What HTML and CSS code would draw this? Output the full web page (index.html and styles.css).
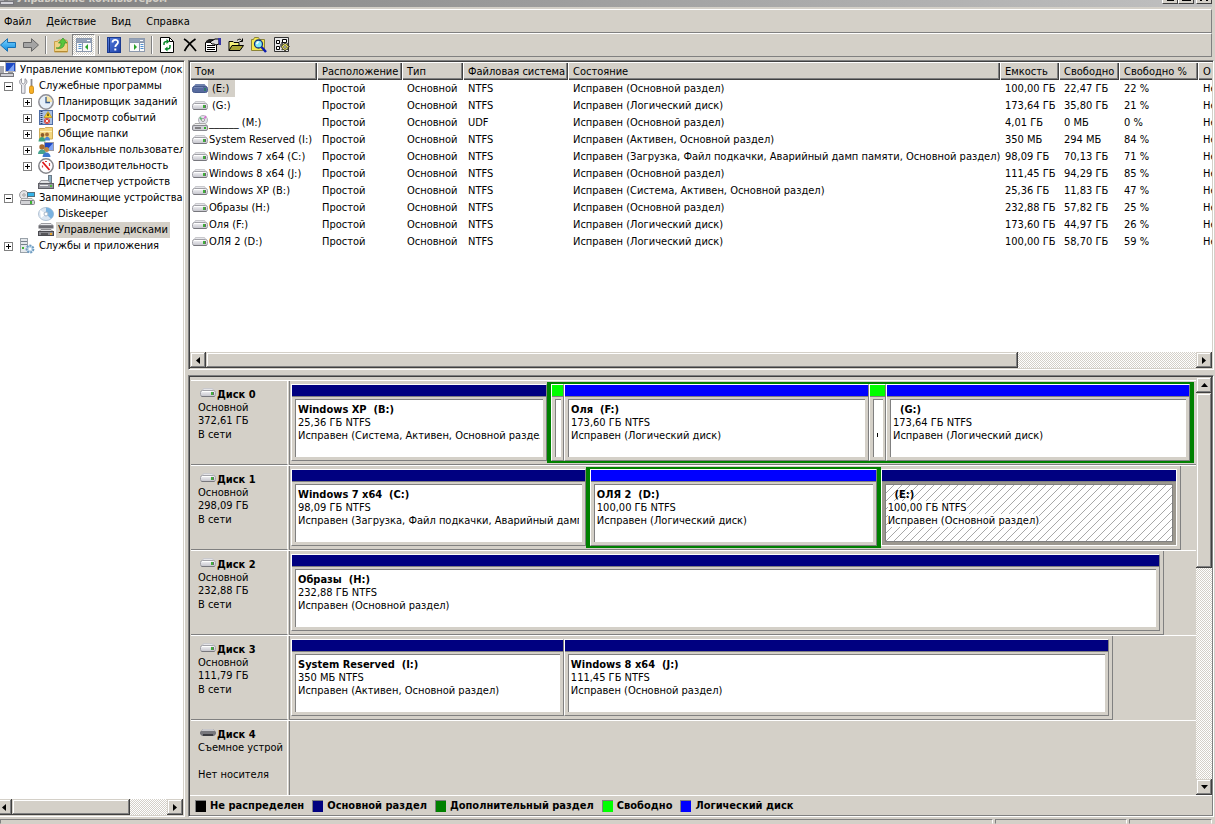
FILE: index.html
```
<!DOCTYPE html>
<html lang="ru">
<head>
<meta charset="utf-8">
<title>Управление компьютером</title>
<link rel="stylesheet" href="styles.css">
</head>
<body>
<svg class="sprite" aria-hidden="true">
  <defs>
    <linearGradient id="gDrive" x1="0" y1="0" x2="0" y2="1"><stop offset="0" stop-color="#f8f8fa"/><stop offset="1" stop-color="#c2c2ca"/></linearGradient>
    <linearGradient id="gBlue" x1="0" y1="0" x2="0" y2="1"><stop offset="0" stop-color="#7fd4ff"/><stop offset="1" stop-color="#0a8ae0"/></linearGradient>
    <linearGradient id="gHelp" x1="0" y1="0" x2="1" y2="1"><stop offset="0" stop-color="#5a82e0"/><stop offset="1" stop-color="#1c3fa8"/></linearGradient>
  </defs>
  <symbol id="drive" viewBox="0 0 16 10"><path d="M3.500 0h9L15 3H1z" fill="#c9c9cd"/><path d="M4 1h8l1 1H3z" fill="#e6e6ea"/><rect x=".5" y="2.500" width="15" height="6" rx="2" fill="url(#gDrive)" stroke="#a2a2a8"/><path d="M1.500 8.500h13" stroke="#77777d"/><path d="M2 3.500h9" stroke="#fff"/><rect x="11" y="4" width="2" height="3" fill="#3fae3a"/><rect x="13" y="4" width="1" height="3" fill="#68686c"/></symbol>
  <symbol id="driveSel" viewBox="0 0 16 10"><path d="M3.500 0h9L15 3H1z" fill="#7082ae"/><rect x=".5" y="2.500" width="15" height="6" rx="2" fill="#566a9e" stroke="#465a8c"/><path d="M2 3.500h9" stroke="#7486b4"/><rect x="12" y="4" width="2" height="3" fill="#2d7a6a"/></symbol>
  <symbol id="cdDrive" viewBox="0 0 16 16"><circle cx="11" cy="5" r="4.500" fill="#e2e2ea" stroke="#b4b4ba"/><path d="m12.500 3.500 1.500-2.500" stroke="#d46ad0" stroke-width="1.500"/><path d="M10 5 8 2.500" stroke="#55c06a" stroke-width="2"/><circle cx="11" cy="5" r="1.500" fill="#fff" stroke="#999"/><path d="M3 8.500h10l2.500 2.500H.5z" fill="#eee" stroke="#aaa"/><rect x=".5" y="10.500" width="15" height="5" rx="1.500" fill="#d0d0d6" stroke="#88888e"/><path d="M3 13h6" stroke="#333"/><rect x="12" y="12" width="2" height="2" fill="#2fae2a"/></symbol>
  <symbol id="removable" viewBox="0 0 16 10"><path d="M3 1h10l3 3v2l-2 2H2L0 6V4z" fill="#77777c"/><path d="M3 1h10l2 2H1z" fill="#c8c8cc"/><path d="M3 6h10v2H3z" fill="#3b3b40"/></symbol>
  <symbol id="back" viewBox="0 0 16 14"><path d="M.5 7 7.500.700v3.800h8v5h-8v3.800z" fill="url(#gBlue)" stroke="#1670b4"/></symbol>
  <symbol id="fwd" viewBox="0 0 16 14"><path d="M15.500 7 8.500.700v3.800h-8v5h8v3.800z" fill="#a4a4a4" stroke="#666"/></symbol>
  <symbol id="upFolder" viewBox="0 0 16 16"><path d="M1.500 15V4.500h3l1-1.500h8l1 1.500V15z" fill="#f0d284" stroke="#caa14a"/><path d="M2 14.500h12" stroke="#b58a32"/><path d="M3 11c4 0 5-2 5-5H5.500L10 1l4 5h-2.500c0 4-3 6.500-8.500 5z" fill="#58c63c" stroke="#33912a" stroke-width=".7"/></symbol>
  <symbol id="paneL" viewBox="0 0 16 14"><rect x=".5" y=".5" width="15" height="13" fill="#fafafa" stroke="#8d9aae"/><path d="M1 1h14v3H1z" fill="#93a1b8"/><path d="M11 2.500h3" stroke="#fff"/><path d="M1 4.500h14M6.500 5v8" stroke="#8896ac"/><path d="M2.500 6.500h3m-3 2h3m-3 2h3" stroke="#4f8fd0"/><path d="m12 6-3 3 3 3z" fill="#27a127"/></symbol>
  <symbol id="paneR" viewBox="0 0 16 14"><rect x=".5" y=".5" width="15" height="13" fill="#fafafa" stroke="#8d9aae"/><path d="M1 1h14v3H1z" fill="#93a1b8"/><path d="M11 2.500h3" stroke="#fff"/><path d="M1 4.500h14M10.500 5v8" stroke="#8896ac"/><path d="M11.500 6.500h3m-3 2h3m-3 2h3" stroke="#4f8fd0"/><path d="m5 6 3 3-3 3z" fill="#27a127"/></symbol>
  <symbol id="help" viewBox="0 0 14 16"><rect x=".5" y=".5" width="13" height="15" fill="url(#gHelp)" stroke="#1b3a90"/><path d="M2.500 1v14" stroke="#17317e"/><path d="M5.500 5.500C5.500 2 11 2 11 5.200 11 7.500 8.300 7.500 8.300 10" fill="none" stroke="#fff" stroke-width="1.800"/><rect x="7.300" y="11.500" width="2" height="2" fill="#fff"/></symbol>
  <symbol id="refresh" viewBox="0 0 14 16"><path d="M.5.500h9l4 4v11H.5z" fill="#fff" stroke="#000"/><path d="M9.500.500v4h4" fill="none" stroke="#000"/><path d="M4 8V6.500C4 5 5 4.500 7 4.500M10 8v2c0 1.500-1 2-3 2" fill="none" stroke="#0a8a2a" stroke-width="1.500"/><path d="m6.500 2 3 2.500-3 2.500zM7.500 9.500l-3 2.500 3 2.500z" fill="#0a8a2a"/></symbol>
  <symbol id="del" viewBox="0 0 14 14"><path d="M1 1c4 2 8 7 12 12M12.500 1C8 4 4 8 1.500 13" fill="none" stroke="#000" stroke-width="1.700"/></symbol>
  <symbol id="props" viewBox="0 0 16 16"><path d="M.5 5.500h11v9H.5z" fill="#fff" stroke="#000"/><path d="M1 4 4 2h5l-1 4H1z" fill="#222"/><path d="M2 8.500h8M2 10.500h8M2 12.500h8" stroke="#000"/><path d="m5 5 5-3h4v5l-3 1-2-1H7z" fill="#d8d8d8" stroke="#000"/><path d="M13 1h3v7h-2" fill="#3636a8"/></symbol>
  <symbol id="open" viewBox="0 0 16 14"><path d="M1 12.500v-9h4l1 1h5v3" fill="#f5f07a" stroke="#000"/><path d="m1 12.500 3-5h11.500l-3.500 5z" fill="#a9a436" stroke="#000"/><path d="M9 2.500c2-2 4-1.500 5 .5M14.500.500v3h-3" fill="none" stroke="#000"/></symbol>
  <symbol id="find" viewBox="0 0 16 16"><path d="M.5 13.500V2.500h2l1-2h4l1 2h5v11z" fill="#f6e94e" stroke="#8b8436"/><circle cx="7.500" cy="7" r="4" fill="#7fe9f6" stroke="#16327c" stroke-width="1.300"/><path d="m5.500 7 2-2.500" stroke="#fff" stroke-width="1.500"/><path d="m10.500 10 4.500 5" stroke="#0c1db0" stroke-width="2.500"/></symbol>
  <symbol id="gearDoc" viewBox="0 0 16 16"><path d="M.5.500h14v14H.5z" fill="#e8e8e8" stroke="#333"/><path d="M2.500 3.500h3v3h-3zM2.500 9.500h3v3h-3zM8.500 2.500h4v3h-4z" fill="#fff" stroke="#000"/><path d="M7 6h2M6 8h2" stroke="#000"/><path d="m11 5.500 1 1.800 2-.8-.6 2.100 2.100.9-2 1.200.9 2-2.200-.5-1.200 2.300-1-2.200-2.200.6.8-2-2-1.200 2-1-.7-2 2.200.7z" fill="#f4ee5a" stroke="#222" stroke-width=".8"/><circle cx="11" cy="10" r="1.300" fill="#fff" stroke="#333" stroke-width=".8"/></symbol>
  <symbol id="computer" viewBox="0 0 16 16"><rect x="5.500" y=".5" width="10" height="9" fill="#1d49c4" stroke="#b3b3bb"/><path d="m8 9 6-7v7z" fill="#7fa4f5"/><path d="M8 10h5v2H8z" fill="#999"/><path d="M0 4h4v8H0z" fill="#a9a9af"/><rect x=".5" y="11.500" width="13" height="3" fill="#d0d0d6" stroke="#77777d"/></symbol>
  <symbol id="tools" viewBox="0 0 16 16"><path d="M2.500.700v4l1.800 1.300L6 4.700v-4c2.500 1.300 2.500 4.800 0 6.300v8.300H2.500V7C0 5.500 0 2 2.500.700z" fill="#e9e9ee" stroke="#8d8d95" stroke-width=".9"/><path d="M12.500 1v7" stroke="#88888e" stroke-width="1.800"/><rect x="10.500" y="8" width="4" height="7.500" rx="1.500" fill="#f6b025" stroke="#c78410" stroke-width=".8"/></symbol>
  <symbol id="clock" viewBox="0 0 16 16"><circle cx="8" cy="8" r="7.200" fill="#e6eff9" stroke="#8f8f95" stroke-width="1.500"/><path d="M8 2a6 6 0 0 1 6 6H8z" fill="#f8e3a0"/><path d="M8 3v5.500h4" fill="none" stroke="#375a8c" stroke-width="1.300"/></symbol>
  <symbol id="events" viewBox="0 0 16 16"><rect x="1.500" y=".5" width="13" height="14" fill="#a9bfe2" stroke="#4e6da6"/><path d="M3.500 1v13" stroke="#273f70" stroke-dasharray="1 1" stroke-width="2"/><path d="m10 1.500 4 6H6z" fill="#f7cf2c" stroke="#b58c06" stroke-width=".6"/><path d="M10 3.500v2.500" stroke="#000"/><circle cx="9" cy="11" r="3" fill="#da4b40"/><path d="m7.700 9.700 2.600 2.600m0-2.600-2.600 2.600" stroke="#fff" stroke-width=".9"/></symbol>
  <symbol id="shared" viewBox="0 0 16 16"><path d="M1.500 13V2.500h5l1-1h7v11.500z" fill="#f3d680" stroke="#d1ad55"/><path d="M2 5.500h12" stroke="#fff1b8"/><circle cx="4.500" cy="9" r="1.900" fill="#8a5a2a"/><circle cx="9" cy="8.500" r="1.900" fill="#a56c34"/><path d="M.5 15.500c0-6 7-6 7 0z" fill="#3da27c"/><path d="M6.500 14.500c0-5 5.500-5 5.500 0z" fill="#4a8ad6"/></symbol>
  <symbol id="users" viewBox="0 0 16 16"><rect x="6.500" y=".5" width="9" height="8" fill="#1d49c4" stroke="#9a9aa2"/><path d="m9 8 6-7v7z" fill="#7fa4f5"/><circle cx="4" cy="5" r="2.700" fill="#a86c30"/><circle cx="8.500" cy="7.500" r="2.500" fill="#c08a48"/><path d="M0 12c0-6 8-6 8 0z" fill="#46a38e"/><path d="M4.500 15c0-6 8-6 8 0z" fill="#3e78cf"/></symbol>
  <symbol id="perf" viewBox="0 0 16 16"><circle cx="8" cy="8" r="7.200" fill="#fff" stroke="#85858a" stroke-width="1.500"/><path d="m4.500 4 7 8" stroke="#e01818" stroke-width="1.800"/><path d="M4.500 7.500v2M7 3.500h2M11.500 5v3" fill="none" stroke="#d04040" stroke-width="1.200"/></symbol>
  <symbol id="devmgr" viewBox="0 0 16 16"><rect x="10.500" y="1.500" width="3" height="7" fill="#8fb0c4" stroke="#6b7a86"/><path d="M3 6.500h7l3 3H1z" fill="#e3e3e6" stroke="#99999e"/><rect x=".5" y="9.500" width="15" height="5" fill="#96969e" stroke="#5e5e64"/><path d="M2 11.500h8" stroke="#eee"/><rect x="12" y="11" width="2" height="2" fill="#4dbb3a"/></symbol>
  <symbol id="storage" viewBox="0 0 16 16"><circle cx="5" cy="5" r="4.400" fill="#e4e4e7" stroke="#98989c"/><circle cx="5" cy="5" r="1.200" fill="#fff" stroke="#999"/><rect x="8.500" y="2.500" width="7" height="4" fill="#36b4ea" stroke="#56707c"/><path d="M3 8.500h10l2 2H1.500z" fill="#eee" stroke="#aaa"/><rect x="1.500" y="10.500" width="14" height="4" rx="1" fill="#d2d2d6" stroke="#85858b"/><rect x="11" y="11" width="2" height="3" fill="#3fb536"/></symbol>
  <symbol id="keeper" viewBox="0 0 16 16"><ellipse cx="8" cy="8" rx="7.500" ry="6.500" fill="#dbe6f2" stroke="#b3c3d4"/><path d="M8 1.500c4 0 7.500 3 7.500 6.500 0 2-1 3.500-2.500 4.700L8 8z" fill="#7ab2e0"/><path d="m2 4 6 4-5 4z" fill="#fff"/><circle cx="8" cy="8" r="2" fill="#fff" stroke="#a6b6c8"/></symbol>
  <symbol id="diskmgmt" viewBox="0 0 16 16"><path d="M3 1.500h10l2 2H1z" fill="#e9e9ec" stroke="#9d9da2"/><rect x=".5" y="3.500" width="15" height="3" fill="#6c6c72"/><path d="M3 7.500h10l2 2H1z" fill="#dedee2" stroke="#8d8d92"/><rect x=".5" y="9.500" width="15" height="4" fill="#8d8d93" stroke="#4a4a50"/><path d="M3 12h7" stroke="#222"/><rect x="12" y="11" width="2" height="2" fill="#e8a52e"/></symbol>
  <symbol id="services" viewBox="0 0 16 16"><rect x="1.500" y=".5" width="7" height="14" fill="#e4e8ec" stroke="#9aa2a9"/><path d="M2 3.500h6M2 6.500h6" stroke="#77838d"/><rect x="3" y="9" width="2" height="2" fill="#3fb536"/><circle cx="11" cy="11" r="3.400" fill="#c5dcee" stroke="#6f9cc0" stroke-width="2" stroke-dasharray="2 1"/><circle cx="11" cy="11" r="1.200" fill="#fff"/></symbol>
  <symbol id="left" viewBox="0 0 4 7"><path d="M4 0v7L0 3.500z"/></symbol>
  <symbol id="right" viewBox="0 0 4 7"><path d="M0 0v7l4-3.500z"/></symbol>
  <symbol id="up" viewBox="0 0 7 4"><path d="M0 4h7L3.500 0z"/></symbol>
  <symbol id="down" viewBox="0 0 7 4"><path d="M0 0h7L3.500 4z"/></symbol>
</svg>

<div class="window">
  <header class="titlebar">
    <div class="caption"><svg class="i16"><use href="#computer"/></svg><span>Управление компьютером</span></div>
    <div class="captionbtns"><button aria-label="Свернуть"><i class="min"></i></button><button aria-label="Развернуть"><i class="max"></i></button><button class="close" aria-label="Закрыть"><i class="cross"></i></button></div>
  </header>
  <nav class="menu"><button>Файл</button><button>Действие</button><button>Вид</button><button>Справка</button></nav>
  <div class="toolbar">
    <button aria-label="Назад"><svg width="16" height="14"><use href="#back"/></svg></button>
    <button aria-label="Вперед"><svg width="16" height="14"><use href="#fwd"/></svg></button>
    <i class="sep"></i>
    <button aria-label="Вверх"><svg class="i16"><use href="#upFolder"/></svg></button>
    <button class="pressed" aria-label="Дерево консоли"><svg width="16" height="14"><use href="#paneL"/></svg></button>
    <i class="sep"></i>
    <button aria-label="Справка"><svg width="14" height="16"><use href="#help"/></svg></button>
    <button aria-label="Панель действий"><svg width="16" height="14"><use href="#paneR"/></svg></button>
    <i class="sep"></i>
    <button aria-label="Обновить"><svg width="14" height="16"><use href="#refresh"/></svg></button>
    <button aria-label="Удалить"><svg width="14" height="14"><use href="#del"/></svg></button>
    <button aria-label="Свойства"><svg class="i16"><use href="#props"/></svg></button>
    <button aria-label="Открыть"><svg width="16" height="14"><use href="#open"/></svg></button>
    <button aria-label="Найти"><svg class="i16"><use href="#find"/></svg></button>
    <button aria-label="Параметры"><svg class="i16"><use href="#gearDoc"/></svg></button>
  </div>

  <div class="panes">
    <aside class="treepane">
      <ul class="tree">
        <li class="root"><svg class="i16"><use href="#computer"/></svg><span>Управление компьютером (локальным)</span></li>
        <li><button class="exp" aria-label="Свернуть"></button><svg class="i16"><use href="#tools"/></svg><span>Служебные программы</span></li>
        <li class="l2"><button class="exp plus" aria-label="Развернуть"></button><svg class="i16"><use href="#clock"/></svg><span>Планировщик заданий</span></li>
        <li class="l2"><button class="exp plus" aria-label="Развернуть"></button><svg class="i16"><use href="#events"/></svg><span>Просмотр событий</span></li>
        <li class="l2"><button class="exp plus" aria-label="Развернуть"></button><svg class="i16"><use href="#shared"/></svg><span>Общие папки</span></li>
        <li class="l2"><button class="exp plus" aria-label="Развернуть"></button><svg class="i16"><use href="#users"/></svg><span>Локальные пользователи</span></li>
        <li class="l2"><button class="exp plus" aria-label="Развернуть"></button><svg class="i16"><use href="#perf"/></svg><span>Производительность</span></li>
        <li class="l2"><i class="noexp"></i><svg class="i16"><use href="#devmgr"/></svg><span>Диспетчер устройств</span></li>
        <li><button class="exp" aria-label="Свернуть"></button><svg class="i16"><use href="#storage"/></svg><span>Запоминающие устройства</span></li>
        <li class="l2"><i class="noexp"></i><svg class="i16"><use href="#keeper"/></svg><span>Diskeeper</span></li>
        <li class="l2"><i class="noexp"></i><svg class="i16"><use href="#diskmgmt"/></svg><span class="sel">Управление дисками</span></li>
        <li><button class="exp plus" aria-label="Развернуть"></button><svg class="i16"><use href="#services"/></svg><span>Службы и приложения</span></li>
      </ul>
      <div class="hscroll treescroll"><button aria-label="Влево"><svg width="4" height="7"><use href="#left"/></svg></button><i class="thumb treethumb"></i><i class="track"></i><button aria-label="Вправо"><svg width="4" height="7"><use href="#right"/></svg></button></div>
    </aside>

    <main class="right">
      <section class="listpane">
        <div class="listview">
          <table>
            <colgroup><col class="c-vol"><col class="c-lay"><col class="c-type"><col class="c-fs"><col class="c-state"><col class="c-cap"><col class="c-free"><col class="c-pct"><col class="c-fault"></colgroup>
            <thead><tr><th>Том</th><th>Расположение</th><th>Тип</th><th>Файловая система</th><th>Состояние</th><th>Емкость</th><th>Свободно</th><th>Свободно %</th><th>О</th></tr></thead>
            <tbody>
              <tr><td><div class="vol"><svg class="drv"><use href="#driveSel"/></svg><span class="sel lead">(E:)</span></div></td><td>Простой</td><td>Основной</td><td>NTFS</td><td>Исправен (Основной раздел)</td><td>100,00 ГБ</td><td>22,47 ГБ</td><td>22 %</td><td>Нет</td></tr>
              <tr><td><div class="vol"><svg class="drv"><use href="#drive"/></svg><span class="lead">(G:)</span></div></td><td>Простой</td><td>Основной</td><td>NTFS</td><td>Исправен (Логический диск)</td><td>173,64 ГБ</td><td>35,80 ГБ</td><td>21 %</td><td>Нет</td></tr>
              <tr><td><div class="vol"><svg class="i16"><use href="#cdDrive"/></svg><span>______ (M:)</span></div></td><td>Простой</td><td>Основной</td><td>UDF</td><td>Исправен (Основной раздел)</td><td>4,01 ГБ</td><td>0 МБ</td><td>0 %</td><td>Нет</td></tr>
              <tr><td><div class="vol"><svg class="drv"><use href="#drive"/></svg><span>System Reserved (I:)</span></div></td><td>Простой</td><td>Основной</td><td>NTFS</td><td>Исправен (Активен, Основной раздел)</td><td>350 МБ</td><td>294 МБ</td><td>84 %</td><td>Нет</td></tr>
              <tr><td><div class="vol"><svg class="drv"><use href="#drive"/></svg><span>Windows 7 x64 (C:)</span></div></td><td>Простой</td><td>Основной</td><td>NTFS</td><td>Исправен (Загрузка, Файл подкачки, Аварийный дамп памяти, Основной раздел)</td><td>98,09 ГБ</td><td>70,13 ГБ</td><td>71 %</td><td>Нет</td></tr>
              <tr><td><div class="vol"><svg class="drv"><use href="#drive"/></svg><span>Windows 8 x64 (J:)</span></div></td><td>Простой</td><td>Основной</td><td>NTFS</td><td>Исправен (Основной раздел)</td><td>111,45 ГБ</td><td>94,29 ГБ</td><td>85 %</td><td>Нет</td></tr>
              <tr><td><div class="vol"><svg class="drv"><use href="#drive"/></svg><span>Windows XP (B:)</span></div></td><td>Простой</td><td>Основной</td><td>NTFS</td><td>Исправен (Система, Активен, Основной раздел)</td><td>25,36 ГБ</td><td>11,83 ГБ</td><td>47 %</td><td>Нет</td></tr>
              <tr><td><div class="vol"><svg class="drv"><use href="#drive"/></svg><span>Образы (H:)</span></div></td><td>Простой</td><td>Основной</td><td>NTFS</td><td>Исправен (Основной раздел)</td><td>232,88 ГБ</td><td>57,82 ГБ</td><td>25 %</td><td>Нет</td></tr>
              <tr><td><div class="vol"><svg class="drv"><use href="#drive"/></svg><span>Оля (F:)</span></div></td><td>Простой</td><td>Основной</td><td>NTFS</td><td>Исправен (Логический диск)</td><td>173,60 ГБ</td><td>44,97 ГБ</td><td>26 %</td><td>Нет</td></tr>
              <tr><td><div class="vol"><svg class="drv"><use href="#drive"/></svg><span>ОЛЯ 2 (D:)</span></div></td><td>Простой</td><td>Основной</td><td>NTFS</td><td>Исправен (Логический диск)</td><td>100,00 ГБ</td><td>58,70 ГБ</td><td>59 %</td><td>Нет</td></tr>
            </tbody>
          </table>
        </div>
        <div class="hscroll"><button aria-label="Влево"><svg width="4" height="7"><use href="#left"/></svg></button><i class="thumb listthumb"></i><i class="track"></i><button aria-label="Вправо"><svg width="4" height="7"><use href="#right"/></svg></button></div>
      </section>
      <div class="splitter"></div>
      <section class="diskpane">
        <div class="diskview">
          <div class="disks">
            <div class="disk">
              <div class="label"><div class="name"><svg class="drv"><use href="#drive"/></svg><b>Диск 0</b></div><p>Основной</p><p>372,61 ГБ</p><p class="status">В сети</p></div>
              <div class="lanebox"><div class="lane full">
                <div class="part" style="flex-grow:254"><i class="stripe"></i><div class="body"><b>Windows XP  (B:)</b><p>25,36 ГБ NTFS</p><p>Исправен (Система, Активен, Основной раздел)</p></div></div>
                <div class="ext" style="flex-grow:639">
                  <div class="part free" style="flex-grow:11"><i class="stripe"></i><div class="body"></div></div>
                  <div class="part logical" style="flex-grow:303"><i class="stripe"></i><div class="body"><b>Оля  (F:)</b><p>173,60 ГБ NTFS</p><p>Исправен (Логический диск)</p></div></div>
                  <div class="part free" style="flex-grow:15"><i class="stripe"></i><div class="body"><i class="tick"></i></div></div>
                  <div class="part logical" style="flex-grow:302"><i class="stripe"></i><div class="body"><b>  (G:)</b><p>173,64 ГБ NTFS</p><p>Исправен (Логический диск)</p></div></div>
                </div>
              </div></div>
            </div>
            <div class="disk">
              <div class="label"><div class="name"><svg class="drv"><use href="#drive"/></svg><b>Диск 1</b></div><p>Основной</p><p>298,09 ГБ</p><p class="status">В сети</p></div>
              <div class="lanebox"><div class="lane" style="width:98.4%">
                <div class="part" style="flex-grow:293"><i class="stripe"></i><div class="body"><b>Windows 7 x64  (C:)</b><p>98,09 ГБ NTFS</p><p>Исправен (Загрузка, Файл подкачки, Аварийный дамп памяти, Основной раздел)</p></div></div>
                <div class="ext" style="flex-grow:287"><div class="part logical" style="flex-grow:1"><i class="stripe"></i><div class="body"><b>ОЛЯ 2  (D:)</b><p>100,00 ГБ NTFS</p><p>Исправен (Логический диск)</p></div></div></div>
                <div class="part selected" style="flex-grow:295"><i class="stripe"></i><div class="body"><b>  (E:)</b><p><span>100,00 ГБ NTFS</span></p><p><span>Исправен (Основной раздел)</span></p></div></div>
              </div></div>
            </div>
            <div class="disk">
              <div class="label"><div class="name"><svg class="drv"><use href="#drive"/></svg><b>Диск 2</b></div><p>Основной</p><p>232,88 ГБ</p><p class="status">В сети</p></div>
              <div class="lanebox"><div class="lane" style="width:96.5%">
                <div class="part" style="flex-grow:1"><i class="stripe"></i><div class="body"><b>Образы  (H:)</b><p>232,88 ГБ NTFS</p><p>Исправен (Основной раздел)</p></div></div>
              </div></div>
            </div>
            <div class="disk">
              <div class="label"><div class="name"><svg class="drv"><use href="#drive"/></svg><b>Диск 3</b></div><p>Основной</p><p>111,79 ГБ</p><p class="status">В сети</p></div>
              <div class="lanebox"><div class="lane" style="width:90.8%">
                <div class="part" style="flex-grow:271"><i class="stripe"></i><div class="body"><b>System Reserved  (I:)</b><p>350 МБ NTFS</p><p>Исправен (Активен, Основной раздел)</p></div></div>
                <div class="part" style="flex-grow:543"><i class="stripe"></i><div class="body"><b>Windows 8 x64  (J:)</b><p>111,45 ГБ NTFS</p><p>Исправен (Основной раздел)</p></div></div>
              </div></div>
            </div>
            <div class="disk">
              <div class="label"><div class="name"><svg class="drv"><use href="#removable"/></svg><b>Диск 4</b></div><p>Съемное устройство</p><p>&nbsp;</p><p class="status">Нет носителя</p></div>
              <div class="lanebox"><div class="lane empty"></div></div>
            </div>
          </div>
          <div class="vscroll"><button aria-label="Вверх"><svg width="7" height="4"><use href="#up"/></svg></button><i class="thumb diskthumb"></i><i class="track"></i><button aria-label="Вниз"><svg width="7" height="4"><use href="#down"/></svg></button></div>
        </div>
        <div class="legend">
          <span><i class="sw none"></i>Не распределен</span><span><i class="sw pri"></i>Основной раздел</span><span><i class="sw exd"></i>Дополнительный раздел</span><span><i class="sw fre"></i>Свободно</span><span><i class="sw log"></i>Логический диск</span>
        </div>
      </section>
    </main>
  </div>
  <footer class="statusbar"><i class="s1"></i><i class="s2"></i><i class="s3"></i></footer>
</div>
</body>
</html>
```
FILE: styles.css
```
* { box-sizing: border-box; }

body {
  margin: 0;
  background: #d4d0c8;
  color: #000;
  font: 11px/13px "DejaVu Sans Condensed", Tahoma, "DejaVu Sans", sans-serif;
}

p, ul { margin: 0; padding: 0; }

button {
  margin: 0;
  padding: 0;
  border: 0;
  background: none;
  color: inherit;
  font: inherit;
}

svg { display: block; flex: none; }
.sprite { position: absolute; width: 0; height: 0; }
.i16 { width: 16px; height: 16px; }
.drv { width: 16px; height: 10px; }

.window {
  display: flex;
  flex-direction: column;
  height: 100vh;
  overflow: hidden;
}

/* title bar */
.titlebar {
  display: flex;
  flex: none;
  align-items: flex-end;
  justify-content: space-between;
  height: 7px;
  background: linear-gradient(90deg, #808080, #c0c0c0);
  margin-right: 3px;
  overflow: hidden;
}
.caption {
  display: flex;
  align-items: center;
  height: 18px;
  color: #d4d0c8;
  font-weight: bold;
}
.captionbtns { display: flex; height: 14px; padding-bottom: 3px; }
.captionbtns button {
  display: flex;
  align-items: flex-end;
  justify-content: center;
  width: 16px;
  padding-bottom: 2px;
  background: #d4d0c8;
  border: 1px solid;
  border-color: #fff #404040 #404040 #fff;
}
.captionbtns .close { margin-left: 2px; }
.min { width: 7px; height: 2px; background: #000; }
.max { width: 9px; height: 7px; border: 1px solid #000; border-top-width: 2px; }
.cross { width: 8px; height: 2px; border: solid #000; border-width: 0 2px; }

/* menu and toolbar */
.menu {
  display: flex;
  flex: none;
  align-items: center;
  height: 24px;
  margin: 2px 3px 0 0;
  padding-left: 4px;
  border: 1px solid;
  border-color: #fff #808080 #808080;
  border-left: 0;
}
.menu button { margin-right: 15px; }
.toolbar {
  display: flex;
  flex: none;
  align-items: center;
  height: 24px;
  margin: 0 3px 0 -4px;
  border: 1px solid;
  border-color: #fff #808080 #808080;
  border-left: 0;
}
.toolbar button {
  display: flex;
  align-items: center;
  justify-content: center;
  width: 23px;
  height: 22px;
}
.toolbar .pressed {
  background: repeating-conic-gradient(#fff 0 25%, #d4d0c8 0 50%) 0 0 / 2px 2px;
  border: 1px solid;
  border-color: #808080 #fff #fff #808080;
}
.sep {
  flex: none;
  width: 2px;
  height: 18px;
  margin: 0 2px 0 3px;
  background: linear-gradient(90deg, #808080 50%, #fff 50%);
}

/* panes */
.panes {
  display: flex;
  flex: 1;
  min-height: 0;
  margin: 3px 1px 2px 0;
  gap: 3px;
}
.treepane, .listpane, .diskpane {
  display: flex;
  flex-direction: column;
  min-height: 0;
}
.treepane {
  width: 185px;
  flex: none;
  background: #fff;
  border: solid;
  border-width: 1px 1px 1px 0;
  border-color: #808080 #fff #fff;
  box-shadow: inset 0 1px #404040, inset -1px -1px #d4d0c8;
  padding: 1px 1px 1px 0;
  overflow: hidden;
}
.tree { flex: 1; overflow: hidden; list-style: none; }
.tree li { display: flex; height: 16px; align-items: center; white-space: nowrap; }
.tree span { height: 16px; line-height: 16px; margin-left: 2px; padding: 0 2px; }
.tree .l2 { padding-left: 19px; }
.exp {
  flex: none;
  width: 9px;
  height: 9px;
  margin: 0 6px 0 4px;
  border: 1px solid #808080;
  background: linear-gradient(#000, #000) center / 5px 1px no-repeat #fff;
}
.exp.plus {
  background: linear-gradient(#000, #000) center / 5px 1px no-repeat,
    linear-gradient(#000, #000) center / 1px 5px no-repeat, #fff;
}
.noexp { flex: none; width: 19px; }
.sel { background: #d4d0c8; }

.right { flex: 1; min-width: 0; display: flex; flex-direction: column; }
.listpane {
  flex: 306;
  background: #fff;
  border: 1px solid;
  border-color: #808080 #fff #fff #808080;
  box-shadow: inset 1px 1px #404040, inset -1px -1px #d4d0c8;
  padding: 1px;
}
.listview { flex: 1; overflow: hidden; }

table { table-layout: fixed; border-collapse: collapse; width: 1208px; }
.c-vol { width: 127px; }
.c-lay { width: 85px; }
.c-type { width: 61px; }
.c-fs { width: 105px; }
.c-state { width: 432px; }
.c-cap { width: 59px; }
.c-free { width: 60px; }
.c-pct { width: 79px; }
.c-fault { width: 200px; }
th, td { text-align: left; white-space: nowrap; font-weight: normal; padding: 0 0 0 5px; }
th {
  height: 18px;
  background: #d4d0c8;
  box-shadow: inset 1px 1px #fff, inset -1px -1px #404040, inset -2px -2px #808080;
}
td { height: 17px; }
td:first-child { padding-left: 2px; }
.vol { display: flex; align-items: center; height: 17px; }
.vol span { height: 17px; line-height: 17px; padding: 0 1px; }
.vol .lead { padding: 0 6px 0 4px; }

/* scroll bars */
.hscroll { display: flex; flex: none; height: 16px; }
.treescroll { margin-left: -4px; }
.vscroll { display: flex; flex: none; flex-direction: column; width: 16px; }
.hscroll button, .vscroll button, .thumb {
  display: flex;
  flex: none;
  align-items: center;
  justify-content: center;
  background: #d4d0c8;
  box-shadow: inset -1px -1px #404040, inset 1px 1px #d4d0c8, inset -2px -2px #808080, inset 2px 2px #fff;
}
.hscroll button, .vscroll button { width: 16px; height: 16px; }
.track {
  flex: 1;
  background: repeating-conic-gradient(#fff 0 25%, #d4d0c8 0 50%) 0 0 / 2px 2px;
}
.treethumb { width: 118px; }
.listthumb { width: 79.5%; }
.diskthumb { height: 175px; }

.splitter { flex: none; height: 5px; border-top: 1px solid #d4d0c8; }

/* disks */
.diskpane {
  flex: 438;
  border: 1px solid;
  border-color: #808080 #fff #fff #808080;
  box-shadow: inset 1px 1px #404040, inset -1px -1px #808080;
  padding: 1px;
}
.diskview { flex: 1; min-height: 0; display: flex; }
.disks { flex: 1; min-width: 0; overflow: hidden; padding: 3px 0 0 1px; }
.disk { display: flex; height: 85px; border-top: 1px solid #fff; }
.label {
  flex: none;
  width: 97px;
  margin-right: 1px;
  padding: 7px 4px 0 7px;
  border: solid;
  border-width: 0 1px 1px 0;
  border-color: #808080 #fff #808080;
  overflow: hidden;
  white-space: nowrap;
}
.label p { overflow: hidden; }
.name { display: flex; margin-left: 2px; height: 13px; gap: 1px; }
.status { padding-top: 1px; }
.lanebox { flex: 1; min-width: 0; }
.lane {
  display: flex;
  height: 84px;
  padding: 3px 3px 3px 1px;
  border: solid #808080;
  border-width: 0 1px 1px;
}
.lane.full { padding-right: 2px; border-right: 0; }
.lane.empty { border-width: 0 0 0 1px; }
.part, .ext { flex-basis: 0; flex-shrink: 1; min-width: 0; display: flex; }
.ext { margin: -2px 0; border: solid #008000; border-width: 2px 4px; }
.part {
  flex-direction: column;
  border: 1px solid;
  border-color: #fff #808080 #808080 #fff;
}
.stripe { flex: none; height: 12px; background: #000080; border-bottom: 1px solid #808080; }
.logical .stripe { background: #0000ff; }
.free .stripe { background: #00ff00; }
.body {
  flex: 1;
  margin: 2px 3px 3px;
  padding: 3px 3px 0 2px;
  border: solid #808080;
  border-width: 1px 0 0 1px;
  background: #fff;
  overflow: hidden;
  white-space: pre;
}
.body b { display: block; }
.body p { overflow: hidden; }
.free .body { margin: 2px 2px 3px 3px; }
.tick { display: block; width: 1px; height: 4px; margin: 30px 0 0 1px; background: #000; }
.selected { border-color: #fff; background: #9c988f; }
.selected .body {
  border-width: 1px;
  background: linear-gradient(135deg, transparent 46%, #a8a8a8 46%, #a8a8a8 54%, transparent 54%) 0 0 / 8px 8px #fff;
}
.selected span { background: #fff; }

.legend {
  display: flex;
  flex: none;
  align-items: center;
  height: 20px;
  padding-left: 5px;
  gap: 8px;
  border-top: 1px solid #fff;
  font-weight: bold;
  white-space: nowrap;
}
.legend span { display: flex; align-items: center; gap: 4px; }
.sw { width: 11px; height: 12px; border: solid; border-width: 1px 0 0 1px; border-color: #808080; }
.none { background: #000; }
.pri { background: #000080; }
.exd { background: #008000; }
.fre { background: #00ff00; }
.log { background: #0000ff; }

.statusbar { display: flex; flex: none; height: 5px; gap: 2px; padding-right: 3px; }
.statusbar i { border: 1px solid; border-color: #808080 #fff transparent #808080; }
.s1 { flex: 1; }
.s2 { width: 132px; }
.s3 { width: 83px; }
```
